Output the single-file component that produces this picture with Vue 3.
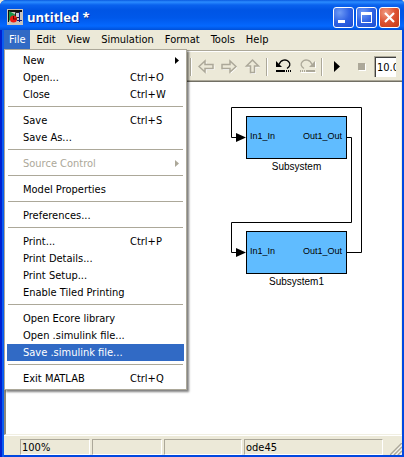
<script setup>
const menus = ['File', 'Edit', 'View', 'Simulation', 'Format', 'Tools', 'Help']

const groups = [
  [
    { label: 'New', sub: true },
    { label: 'Open...', keys: 'Ctrl+O' },
    { label: 'Close', keys: 'Ctrl+W' },
  ],
  [{ label: 'Save', keys: 'Ctrl+S' }, { label: 'Save As...' }],
  [{ label: 'Source Control', sub: true, disabled: true }],
  [{ label: 'Model Properties' }],
  [{ label: 'Preferences...' }],
  [
    { label: 'Print...', keys: 'Ctrl+P' },
    { label: 'Print Details...' },
    { label: 'Print Setup...' },
    { label: 'Enable Tiled Printing' },
  ],
  [
    { label: 'Open Ecore library' },
    { label: 'Open .simulink file...' },
    { label: 'Save .simulink file...', active: true },
  ],
  [{ label: 'Exit MATLAB', keys: 'Ctrl+Q' }],
]

const blocks = [
  { name: 'Subsystem', x: 240, y: 34 },
  { name: 'Subsystem1', x: 240, y: 149 },
]
</script>

<template>
  <div class="window">
    <header class="titlebar">
      <svg class="logo" width="16" height="16" viewBox="0 0 16 16" aria-hidden="true">
        <rect width="16" height="16" fill="#c8c4bc" />
        <path d="M1 1h14v2h-14zM1 1h1v12h-1z" fill="#101010" />
        <path d="M2 2l7 4-7 6z" fill="#16954a" />
        <path d="M8.500 3.500h4v5h-4z" fill="#c8c8d8" stroke="#222" />
        <circle cx="6.500" cy="10" r="3.500" fill="#f01810" />
        <path d="M6 10h4M6.500 7v3" stroke="#600" fill="none" />
        <path d="M12.500 3v10M10 11.500h5" stroke="#101880" fill="none" />
      </svg>
      <h1 class="title">untitled *</h1>
      <div class="controls">
        <button class="ctl" aria-label="Minimize">
          <svg width="19" height="19"><path d="M4 12h7v3h-7z" fill="#fff" /></svg>
        </button>
        <button class="ctl" aria-label="Maximize">
          <svg width="19" height="19"><path d="M4 4h11v11h-11zM5 7v7h9v-7z" fill="#fff" fill-rule="evenodd" /></svg>
        </button>
        <button class="ctl close" aria-label="Close">
          <svg width="19" height="19"><path d="M5 5l9 9M14 5l-9 9" stroke="#fff" stroke-width="2.200" /></svg>
        </button>
      </div>
    </header>

    <div class="frame">
      <div class="menuarea">
        <nav class="menubar">
          <button v-for="m in menus" :key="m" class="menu" :class="{ open: m === 'File' }">{{ m }}</button>
        </nav>
        <div class="dropdown" role="menu">
          <div v-for="(g, i) in groups" :key="i" class="group">
            <button
              v-for="it in g"
              :key="it.label"
              class="item"
              :class="{ active: it.active }"
              :disabled="it.disabled"
              role="menuitem"
            >
              <span class="label">{{ it.label }}</span>
              <span v-if="it.keys" class="keys">{{ it.keys }}</span>
              <svg v-if="it.sub" class="sub" width="4" height="7"><path d="M0 0l4 3.500-4 3.500z" fill="currentColor" /></svg>
            </button>
          </div>
        </div>
      </div>

      <div class="toolbar">
        <span class="divider"></span>
        <button class="tool nav" aria-label="Back" disabled>
          <svg width="17" height="17" viewBox="0 0 17 17">
            <path d="M2 9.500l6-5.500v3.500h8v4h-8v3.500z" fill="none" stroke="#fff" />
            <path d="M1 8.500l6-5.500v3.500h8v4h-8v3.500z" fill="#ece9d8" stroke="#aca899" stroke-width="1.500" />
          </svg>
        </button>
        <button class="tool nav" aria-label="Forward" disabled>
          <svg width="17" height="17" viewBox="0 0 17 17">
            <path d="M16 9.500l-6-5.500v3.500h-8v4h8v3.500z" fill="none" stroke="#fff" />
            <path d="M15 8.500l-6-5.500v3.500h-8v4h8v3.500z" fill="#ece9d8" stroke="#aca899" stroke-width="1.500" />
          </svg>
        </button>
        <button class="tool nav" aria-label="Up" disabled>
          <svg width="17" height="17" viewBox="0 0 17 17">
            <path d="M9.500 3l6 6h-4v6.500h-4v-6.500h-4z" fill="none" stroke="#fff" />
            <path d="M8.500 2l6 6h-4v6.500h-4v-6.500h-4z" fill="#ece9d8" stroke="#aca899" stroke-width="1.500" />
          </svg>
        </button>
        <span class="divider"></span>
        <button class="tool" aria-label="Undo">
          <svg width="17" height="17" viewBox="0 0 17 17">
            <path d="M4 6.500c2-5 7-5.500 9.500-3s1.500 5-1.500 7" fill="none" stroke="#000" stroke-width="1.300" />
            <path d="M1 3v6h6z" fill="#000" />
            <path d="M1 12h9v2h-9zM11 12h1v2h-1zM13 12h1v2h-1zM15 12h1v2h-1z" fill="#000" />
          </svg>
        </button>
        <button class="tool" aria-label="Redo" disabled>
          <svg width="17" height="17" viewBox="0 0 17 17">
            <path d="M2 14.500h15M16.500 4v6" fill="none" stroke="#fff" />
            <path d="M13 6.500c-2-5-7-5.500-9.500-3s-1.500 5 1.500 7" fill="none" stroke="#aca899" stroke-width="1.300" />
            <path d="M16 3v6h-6z" fill="#aca899" />
            <path d="M7 12h9v2h-9zM5 12h1v2h-1zM3 12h1v2h-1zM1 12h1v2h-1z" fill="#aca899" />
          </svg>
        </button>
        <span class="divider"></span>
        <button class="tool" aria-label="Start">
          <svg width="17" height="17" viewBox="0 0 17 17"><path d="M4 3l6 5.500-6 5.500z" fill="#000" /></svg>
        </button>
        <button class="tool" aria-label="Stop" disabled>
          <svg width="17" height="17" viewBox="0 0 17 17">
            <path d="M5 6h7v7h-7z" fill="#fff" /><path d="M4 5h7v7h-7z" fill="#aca899" />
          </svg>
        </button>
        <input class="time" type="text" value="10.0" aria-label="Stop time" />
      </div>

      <main class="canvas">
        <svg class="wires" width="394" height="200" aria-hidden="true">
          <path
            d="M341 55.500h4.500v85h-120v30h8M341 170.500h14.500v-145h-130v30h8"
            fill="none" stroke="#000"
          />
          <path d="M230 51l10 4.500-10 4.500zM230 166l10 4.500-10 4.500z" fill="#000" />
        </svg>
        <div v-for="b in blocks" :key="b.name" class="node" :style="{ left: b.x + 'px', top: b.y + 'px' }">
          <div class="box"><span>In1_In</span><span>Out1_Out</span></div>
          <div class="name">{{ b.name }}</div>
        </div>
      </main>

      <footer class="status">
        <span class="pane">100%</span>
        <span class="pane"></span>
        <span class="pane wide"></span>
        <span class="pane solver">ode45</span>
        <svg class="grip" width="12" height="12" viewBox="0 0 12 12" aria-hidden="true">
          <path d="M1 12L12 1M5 12l7-7M9 12l3-3" stroke="#fff" stroke-width="1.500" />
          <path d="M0 12L12 0M4 12l8-8M8 12l4-4" stroke="#aca899" stroke-width="1.500" />
        </svg>
      </footer>
    </div>
  </div>
</template>

<style>
body {
  margin: 0;
  background: #ece9d8;
}
</style>

<style scoped>
* {
  box-sizing: border-box;
}
.window {
  display: flex;
  flex-direction: column;
  min-height: 100vh;
  border-radius: 6px 4px 0 0;
  background: linear-gradient(to right, #0020d0 2px, #0a5cf0 2px, #0a5cf0 4px, #0048e0 4px);
  font: 11px/17px "DejaVu Sans Condensed", "DejaVu Sans", sans-serif;
  color: #000;
}
button {
  margin: 0;
  padding: 0;
  border: 0;
  background: none;
  font: inherit;
  color: inherit;
}
svg {
  display: block;
}
.titlebar {
  display: flex;
  align-items: center;
  height: 30px;
  padding: 4px 4px 0 7px;
  border-radius: 6px 4px 0 0;
  background: linear-gradient(#0a5ae0 0, #2b8cff 2px, #0a62ee 5px, #0055e5 10px, #0058ea 18px, #0468fe 26px, #0050d8 30px);
}
.title {
  flex: 1;
  margin: 0 0 0 4px;
  font: bold 13px/18px "Open Sans", sans-serif;
  color: #fff;
  text-shadow: 1px 1px 0 #0a2a90;
}
.controls {
  display: flex;
  gap: 2px;
}
.ctl {
  width: 21px;
  height: 21px;
  border: 1px solid #fff;
  border-radius: 3px;
  background: radial-gradient(circle at 30% 25%, #6f9bf5, #2f62e4 50%, #1d4ed0);
}
.ctl.close {
  background: radial-gradient(circle at 30% 25%, #f09a80, #dd5130 50%, #c23a18);
}
.frame {
  flex: 1;
  display: flex;
  flex-direction: column;
  border: solid transparent;
  border-width: 0 2px 2px 4px;
  background: #ece9d8;
  background-clip: padding-box;
}
.menuarea {
  position: relative;
}
.menubar {
  display: flex;
  gap: 1px;
  height: 22px;
  border-bottom: 1px solid #fff;
  box-shadow: inset 0 -1px #aca899;
}
.menu {
  height: 19px;
  padding: 0 5px;
}
.menu.open,
.item.active {
  background: #316ac5;
  color: #fff;
}
.dropdown {
  position: absolute;
  z-index: 2;
  top: 19px;
  left: 0;
  width: 183px;
  padding: 2px;
  border: 1px solid #aca899;
  background: #fff;
  box-shadow: 2px 2px 2px rgba(0, 0, 0, 0.5);
}
.group + .group::before {
  content: "";
  display: block;
  height: 1px;
  margin: 3px 1px 5px;
  background: #aca899;
}
.item {
  display: grid;
  grid-template-columns: 107px 1fr auto;
  align-items: center;
  width: 100%;
  height: 17px;
  padding: 0 5px 0 16px;
  text-align: left;
  white-space: nowrap;
}
.item:disabled {
  color: #aca899;
}
.sub {
  grid-column: 3;
}
.toolbar {
  display: flex;
  align-items: center;
  height: 30px;
  padding: 0 6px 0 184px;
  border-bottom: 1px solid #716f64;
  box-shadow: inset 0 -1px #aca899;
}
.divider {
  width: 2px;
  height: 18px;
  margin: 0 3px 0 2px;
  border-left: 1px solid #aca899;
  border-right: 1px solid #fff;
}
.tool {
  display: grid;
  place-items: center;
  width: 24px;
  height: 22px;
}
.tool.nav {
  width: 23px;
}
.time {
  flex: 1;
  min-width: 0;
  height: 21px;
  margin: 0;
  padding: 0;
  border: solid #aca899;
  border-width: 1px 0 0 1px;
  border-radius: 0;
  box-shadow: inset 1px 1px #404040;
  text-indent: 2px;
  background: #fff;
  font: inherit;
}
.canvas {
  position: relative;
  flex: 1;
  min-height: 340px;
  border: solid #f1efe2;
  border-width: 0 1px 1px 2px;
  border-left-color: #8a887c;
  background: #fff;
  font-family: "Liberation Sans", Arial, sans-serif;
}
.wires {
  position: absolute;
  top: 0;
  left: 0;
}
.node {
  position: absolute;
  width: 101px;
}
.box {
  display: flex;
  align-items: center;
  justify-content: space-between;
  height: 43px;
  padding: 0 4px 2px 3px;
  border: 1px solid #000;
  background: #60bcff;
  font-size: 9px;
}
.name {
  font-size: 10px;
  line-height: 16px;
  text-align: center;
}
.status {
  display: flex;
  gap: 2px;
  height: 20px;
  padding: 3px 0 0 16px;
  border-top: 1px solid #fff;
}
.pane {
  flex: 0 0 70px;
  height: 16px;
  padding-left: 1px;
  border: 1px solid;
  border-color: #aca899 #fff #fff #aca899;
  line-height: 15px;
}
.wide {
  flex-basis: 78px;
}
.solver {
  flex: 1;
}
.grip {
  align-self: end;
  margin-left: 5px;
}
</style>
